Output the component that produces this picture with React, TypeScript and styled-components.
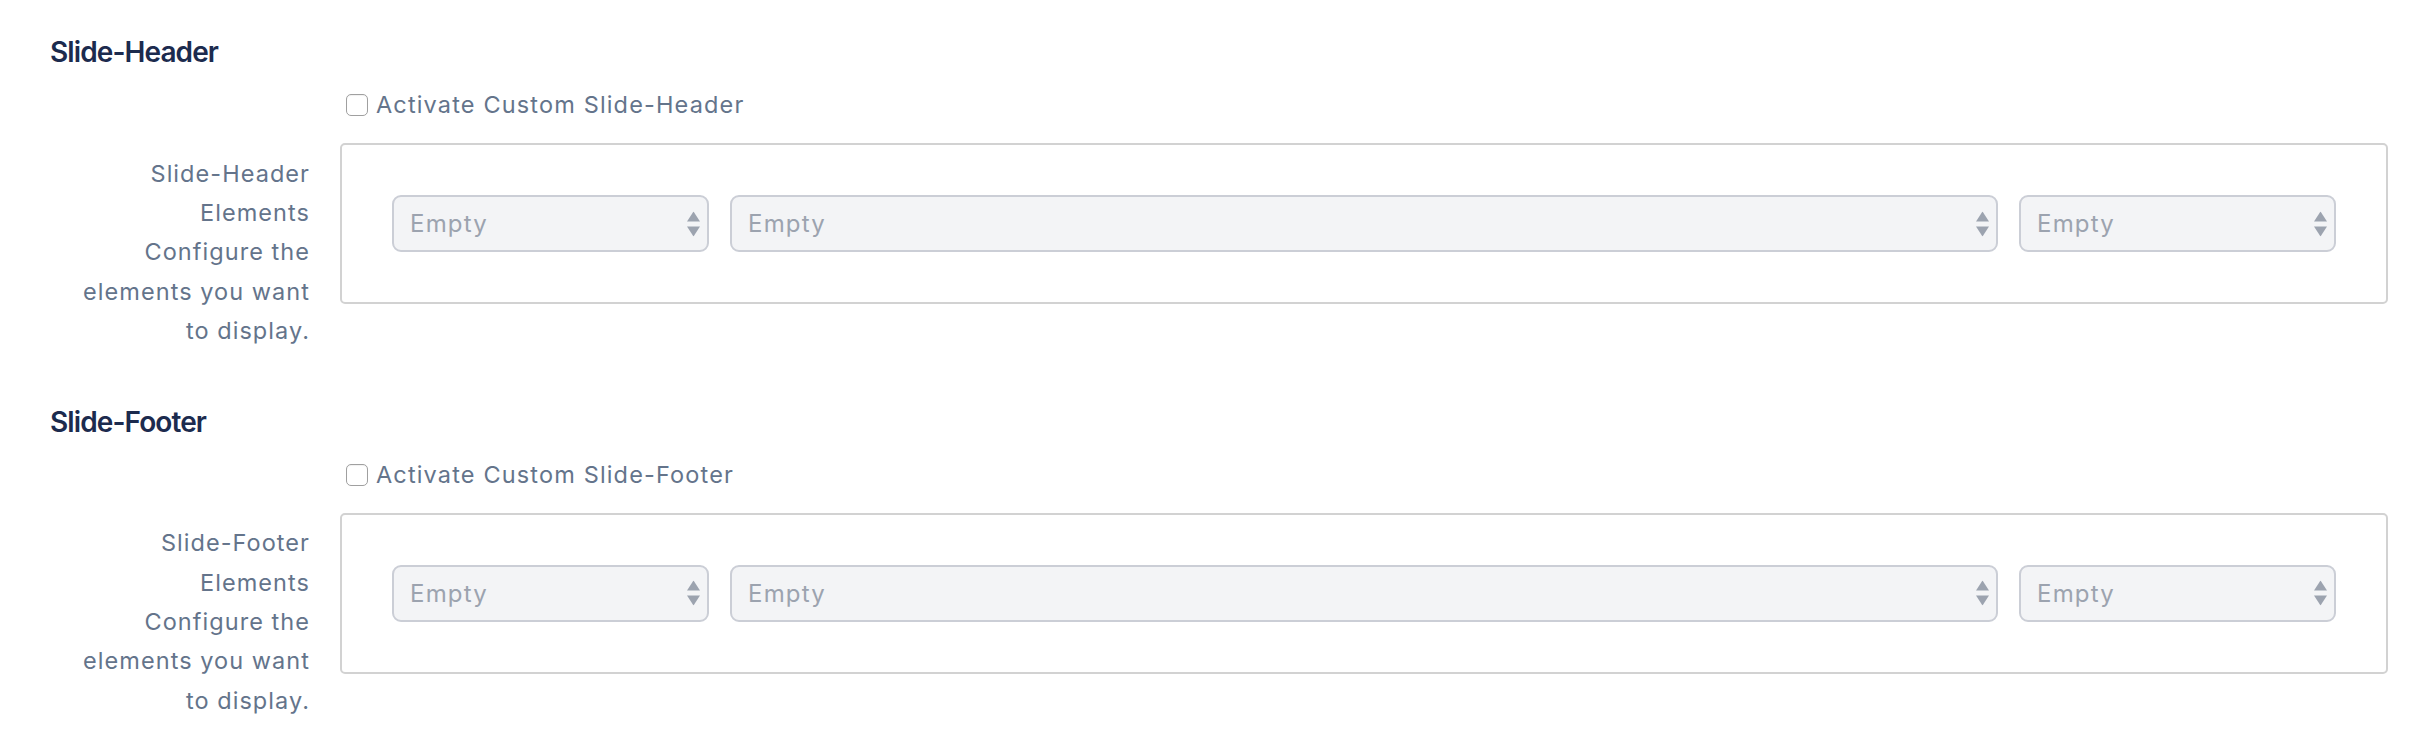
import React from "react";
import styled, { createGlobalStyle } from "styled-components";

const GlobalStyle = createGlobalStyle`
  html, body {
    margin: 0;
    padding: 0;
    background: #ffffff;
  }
  body {
    font-family: Inter, "Noto Sans", "Liberation Sans", sans-serif;
    -webkit-font-smoothing: antialiased;
  }
`;

const Page = styled.div`
  display: flex;
  flex-direction: column;
  gap: 54px;
  padding: 35px 32px 0 50px;
`;

const Section = styled.section`
  display: flex;
  flex-direction: column;
`;

const Heading = styled.h2`
  margin: 0;
  font-size: 28px;
  line-height: 34px;
  font-weight: 600;
  color: #1c2b4e;
  letter-spacing: -0.9px;
`;

const Row = styled.div<{ $top: number }>`
  display: grid;
  grid-template-columns: 260px 1fr;
  column-gap: 30px;
  align-items: start;
  margin-top: ${(p) => p.$top}px;
`;

const LabelCell = styled.div`
  padding: 10.6px 0 0 20px;
  text-align: right;
  font-size: 23.5px;
  line-height: 39.4px;
  letter-spacing: 1.05px;
  color: #64748b;
`;

const LabelLine = styled.div``;

const CheckLabel = styled.label`
  display: flex;
  align-items: center;
  gap: 8px;
  font-size: 23.5px;
  line-height: 32px;
  letter-spacing: 1.15px;
  color: #64748b;
  cursor: pointer;
`;

const CheckBox = styled.input`
  appearance: none;
  -webkit-appearance: none;
  margin: 0 0 0 6px;
  width: 22px;
  height: 22px;
  border: 1px solid #a0a0a0;
  border-radius: 5px;
  background: #ffffff;
  box-shadow: inset 0 1px 1px rgba(0, 0, 0, 0.06);
  flex: none;
`;

const ElementsBox = styled.div`
  border: 2px solid #d2d2d2;
  border-radius: 5px;
  padding: 50px;
  display: grid;
  grid-template-columns: 1fr 4fr 1fr;
  column-gap: 21px;
`;

const SelectWrap = styled.div`
  position: relative;
`;

const Select = styled.select`
  appearance: none;
  -webkit-appearance: none;
  display: block;
  width: 100%;
  height: 57px;
  margin: 0;
  padding: 0 40px 0 16px;
  border: 2px solid #cbced6;
  border-radius: 9px;
  background: #f3f4f6;
  color: #9ca3af;
  font-family: inherit;
  font-size: 24px;
  letter-spacing: 1.2px;
  outline: none;
`;

const Arrows = styled.svg`
  position: absolute;
  right: 9px;
  top: 50%;
  transform: translateY(-50%);
  pointer-events: none;
`;

const SelectArrows = () => (
  <Arrows width="13" height="25" viewBox="0 0 13 25" fill="#9ca3af">
    <polygon points="6.5,0 13,10 0,10" />
    <polygon points="0,15 13,15 6.5,25" />
  </Arrows>
);

const EmptySelect = () => (
  <SelectWrap>
    <Select defaultValue="">
      <option value="">Empty</option>
    </Select>
    <SelectArrows />
  </SelectWrap>
);

const SlideSection = ({ name }: { name: string }) => (
  <Section>
    <Heading>{name}</Heading>
    <Row $top={20}>
      <div />
      <CheckLabel>
        <CheckBox type="checkbox" />
        Activate Custom {name}
      </CheckLabel>
    </Row>
    <Row $top={22}>
      <LabelCell>
        <LabelLine>{name} Elements</LabelLine>
        <LabelLine>Configure the elements you want to display.</LabelLine>
      </LabelCell>
      <ElementsBox>
        <EmptySelect />
        <EmptySelect />
        <EmptySelect />
      </ElementsBox>
    </Row>
  </Section>
);

export default function App() {
  return (
    <>
      <GlobalStyle />
      <Page>
        <SlideSection name="Slide-Header" />
        <SlideSection name="Slide-Footer" />
      </Page>
    </>
  );
}
